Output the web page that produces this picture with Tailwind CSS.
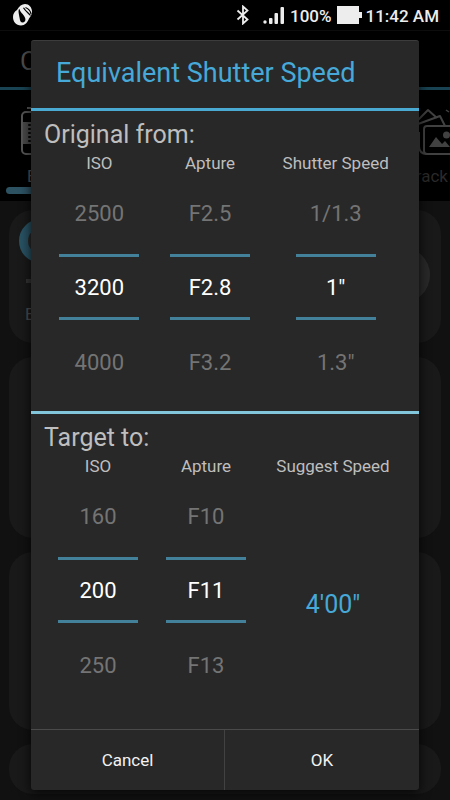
<!DOCTYPE html>
<html lang="en">
<head>
    <meta charset="UTF-8">
    <meta name="viewport" content="width=device-width, initial-scale=1.0">
    <title>Equivalent Shutter Speed</title>
    <script src="https://cdn.jsdelivr.net/npm/@tailwindcss/browser@4"></script>
</head>
<body class="relative flex min-h-screen flex-col overflow-x-hidden bg-[#111111] font-[Roboto,sans-serif] text-[#bebebe]">

    <!-- Status bar -->
    <header class="flex h-[31px] items-center border-b border-[#0d0d0d] bg-black pl-3 pr-[11px] text-[#ededed]">
        <svg class="h-[22px] w-5" viewBox="0 0 20 22">
            <path d="M5 6C7 2 10 0 13 0c4 0 7 3.500 7 7.500 0 3-1.500 5-3 7C15.500 18.500 13 21.500 9 21.500c-5 0-8-4-8-8.500 0-3 1.500-5.500 4-7z" fill="#ededed"/>
            <path d="M7.300 4.800c-1.500 2-.3 5 .3 9.200.4 3 1.200 4.500 3 4.500s3-1.500 2.800-3.500C13 11.500 8.500 9 7.300 4.800z" fill="#000"/>
            <path d="M11.500 3.800c2 3.500 5 5 7 7.700M13.500 3.500c2.500 1 5 3.500 5.500 6.500" fill="none" stroke="#000" stroke-width="1.200"/>
        </svg>
        <svg class="ml-auto h-5 w-4" viewBox="0 0 16 20" fill="none" stroke="#ededed" stroke-width="1.800">
            <path d="M2.500 5.500l10 9L8 18.500v-17l4.500 4-10 9"/>
        </svg>
        <svg class="ml-3 h-5 w-[22px]" viewBox="0 0 22 20" fill="#ededed">
            <circle cx="2" cy="17" r="1.700"/>
            <rect x="6" y="13" width="3.500" height="6" rx="1"/>
            <rect x="11.500" y="8" width="3.500" height="11" rx="1"/>
            <rect x="17.500" y="2" width="3.500" height="17" rx="1"/>
        </svg>
        <span class="ml-[5px] pt-[2px] text-[17px] font-medium leading-5">100%</span>
        <svg class="ml-[5px] h-[18px] w-[25px]" viewBox="0 0 25 18" fill="#ededed">
            <path d="M0 0h22v6h3v6h-3v6H0z"/>
        </svg>
        <span class="ml-1 pt-[2px] text-[17px] font-medium leading-5">11:42 AM</span>
    </header>

    <!-- Page behind the dialog -->
    <div class="flex h-[59px] items-center border-b-[3px] border-[#194352] bg-black pl-5 pt-1">
        <span class="text-[26px] text-[#4c4c4c]">C</span>
    </div>
    <nav class="flex h-[111px] shrink-0 justify-between overflow-hidden bg-black pt-4 text-[17px] text-[#2a2a2a]">
        <div class="flex w-20 flex-col pl-5">
            <svg class="h-[50px] w-[34px] shrink-0" viewBox="0 0 34 50" fill="none" stroke="#555" stroke-width="2">
                <path d="M7 2h12"/>
                <rect x="2" y="6" width="30" height="42" rx="4"/>
                <path d="M3 16h24v22H3z" fill="#484848" stroke="none"/>
                <path d="M9.500 18v20" stroke="#050505" stroke-width="2.500" stroke-dasharray="2 2"/>
            </svg>
            <span class="mt-[10px] pl-[7px] leading-5 text-[#555]">E</span>
            <div class="-ml-[14px] mt-px h-[7px] w-20 rounded-full bg-[#2d5262]"></div>
        </div>
        <div class="flex w-[38px] flex-col items-end">
            <svg class="h-[50px] w-[34px] shrink-0" viewBox="0 0 34 50" fill="none" stroke="#414141" stroke-width="2" stroke-linejoin="round">
                <path d="M2 14L12 4l9 8M2 18l22-8 5 10M3 26v14c0 5 3 8 8 8"/>
                <path d="M36 48H11a3 3 0 0 1-3-3V23a3 3 0 0 1 3-3h25"/>
                <path d="M13 41l7-10 6 7 3-3 5 6z" fill="#414141" stroke="none"/>
                <circle cx="30.500" cy="29" r="3.500" fill="#414141" stroke="none"/>
                <path d="M30 4l3 2" stroke-width="1.500"/>
            </svg>
            <span class="mt-[10px] pr-[2px] leading-5">rack</span>
        </div>
    </nav>
    <main class="flex grow flex-col gap-[14px] overflow-hidden px-[9px] pb-[6px] pt-[9px] text-[#4c4c4c]">
        <section class="flex h-[133px] items-start justify-between rounded-[24px] bg-[#191919] pl-[10px] pr-[11px] pt-[9px]">
            <div>
                <div class="size-11 rounded-full border-[9px] border-[#285262] bg-[#292929]"></div>
                <div class="ml-[7px] mt-4 h-1 w-10 bg-[#333]"></div>
                <div class="ml-[6px] mt-[19px] text-[17px]">E</div>
            </div>
            <div class="mt-[28px] size-14 rounded-full bg-[#292929]"></div>
        </section>
        <section class="h-[181px] rounded-[24px] bg-[#191919]"></section>
        <section class="h-[178px] rounded-[24px] bg-[#191919]"></section>
        <section class="grow rounded-[24px] bg-[#191919]"></section>
    </main>

    <!-- Dialog -->
    <div class="absolute inset-x-[31px] bottom-[10px] top-10 flex flex-col rounded-[3px] border-t border-[#3c3c3c] bg-[#282828] shadow-[0_3px_12px_rgba(0,0,0,0.8)]" role="dialog" aria-labelledby="dialog-title">
        <h1 id="dialog-title" class="flex h-[70px] shrink-0 items-center border-b-[3px] border-[#4baad1] px-[25px] pb-1 text-[27px] leading-8 text-[#46a9d7]">Equivalent Shutter Speed</h1>

        <section class="h-[303px] shrink-0 border-b-[3px] border-[#81c6db] px-[13px] pt-[10px]">
            <h2 class="text-[25px] leading-7">Original from:</h2>
            <div class="mt-1 grid grid-cols-[111fr_111fr_141fr] text-center">
                <div class="flex flex-col items-center">
                    <label for="iso" class="text-[17px] leading-5">ISO</label>
                    <button class="h-[81px] w-20 text-[22px] text-[#747474]">2500</button>
                    <input id="iso" class="h-[66px] w-20 border-y-[3px] border-[#438099] text-center text-[22px] text-white" value="3200">
                    <button class="h-[84px] w-20 text-[22px] text-[#747474]">4000</button>
                </div>
                <div class="flex flex-col items-center">
                    <label for="apture" class="text-[17px] leading-5">Apture</label>
                    <button class="h-[81px] w-20 text-[22px] text-[#747474]">F2.5</button>
                    <input id="apture" class="h-[66px] w-20 border-y-[3px] border-[#438099] text-center text-[22px] text-white" value="F2.8">
                    <button class="h-[84px] w-20 text-[22px] text-[#747474]">F3.2</button>
                </div>
                <div class="flex flex-col items-center">
                    <label for="shutter" class="text-[17px] leading-5">Shutter Speed</label>
                    <button class="h-[81px] w-20 text-[22px] text-[#747474]">1/1.3</button>
                    <input id="shutter" class="h-[66px] w-20 border-y-[3px] border-[#438099] text-center text-[22px] text-white" value="1&quot;">
                    <button class="h-[84px] w-20 text-[22px] text-[#747474]">1.3"</button>
                </div>
            </div>
        </section>

        <section class="grow px-[13px] pt-[10px]">
            <h2 class="text-[25px] leading-7">Target to:</h2>
            <div class="mt-1 grid grid-cols-[108fr_108fr_146fr] text-center">
                <div class="flex flex-col items-center">
                    <label for="target-iso" class="text-[17px] leading-5">ISO</label>
                    <button class="h-[81px] w-20 text-[22px] text-[#747474]">160</button>
                    <input id="target-iso" class="h-[66px] w-20 border-y-[3px] border-[#438099] text-center text-[22px] text-white" value="200">
                    <button class="h-[84px] w-20 text-[22px] text-[#747474]">250</button>
                </div>
                <div class="flex flex-col items-center">
                    <label for="target-apture" class="text-[17px] leading-5">Apture</label>
                    <button class="h-[81px] w-20 text-[22px] text-[#747474]">F10</button>
                    <input id="target-apture" class="h-[66px] w-20 border-y-[3px] border-[#438099] text-center text-[22px] text-white" value="F11">
                    <button class="h-[84px] w-20 text-[22px] text-[#747474]">F13</button>
                </div>
                <div class="flex flex-col items-center">
                    <label for="suggest" class="text-[17px] leading-5">Suggest Speed</label>
                    <output id="suggest" class="flex grow items-center pt-[26px] text-[25px] text-[#46a9d7]">4'00"</output>
                </div>
            </div>
        </section>

        <div class="grid h-[61px] shrink-0 grid-cols-2 border-t border-[#4a4a4a] text-[17px] text-[#f2f2f2]">
            <button class="border-r border-[#424242] pt-[2px]">Cancel</button>
            <button class="pt-[2px]">OK</button>
        </div>
    </div>

</body>
</html>
